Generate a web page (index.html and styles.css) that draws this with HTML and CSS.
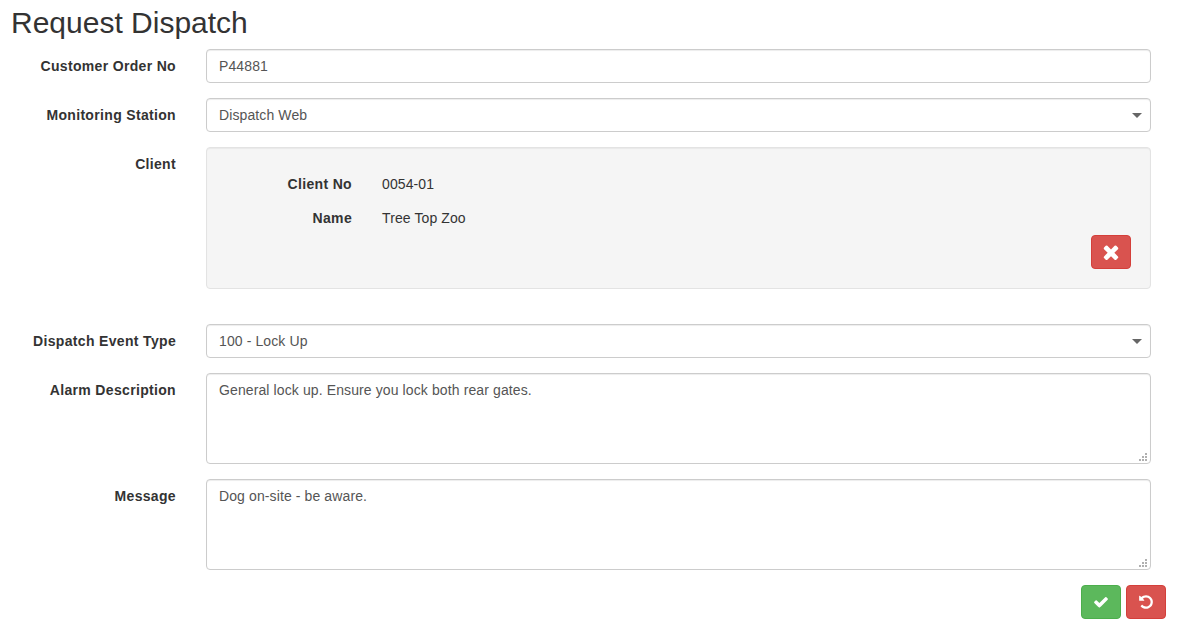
FILE: index.html
```html
<!DOCTYPE html>
<html lang="en">
<head>
<meta charset="utf-8">
<title>Request Dispatch</title>
<link rel="stylesheet" href="styles.css">
</head>
<body>
<h2 class="title">Request Dispatch</h2>
<form class="form">
  <div class="row">
    <label class="label">Customer Order No</label>
    <div class="field"><input class="control" type="text" value="P44881"></div>
  </div>
  <div class="row">
    <label class="label">Monitoring Station</label>
    <div class="field select-wrap">
      <select class="control select"><option>Dispatch Web</option></select>
    </div>
  </div>
  <div class="row row-client">
    <label class="label">Client</label>
    <div class="field">
      <div class="well">
        <div class="well-row"><span class="well-label">Client No</span><span class="well-value">0054-01</span></div>
        <div class="well-row"><span class="well-label">Name</span><span class="well-value">Tree Top Zoo</span></div>
        <div class="well-actions">
          <button class="btn btn-danger" type="button" aria-label="Remove client">
            <svg class="icon icon-times" viewBox="0 0 1792 1792"><path d="M1490 1322q0 40-28 68l-136 136q-28 28-68 28t-68-28l-294-294-294 294q-28 28-68 28t-68-28l-136-136q-28-28-28-68t28-68l294-294-294-294q-28-28-28-68t28-68l136-136q28-28 68-28t68 28l294 294 294-294q28-28 68-28t68 28l136 136q28 28 28 68t-28 68l-294 294 294 294q28 28 28 68z"/></svg>
          </button>
        </div>
      </div>
    </div>
  </div>
  <div class="row">
    <label class="label">Dispatch Event Type</label>
    <div class="field select-wrap">
      <select class="control select"><option>100 - Lock Up</option></select>
    </div>
  </div>
  <div class="row">
    <label class="label">Alarm Description</label>
    <div class="field"><textarea class="control area">General lock up. Ensure you lock both rear gates.</textarea></div>
  </div>
  <div class="row">
    <label class="label">Message</label>
    <div class="field"><textarea class="control area">Dog on-site - be aware.</textarea></div>
  </div>
  <div class="actions">
    <button class="btn btn-success" type="button" aria-label="Save">
      <svg class="icon" viewBox="0 0 1792 1792"><path d="M1671 566q0 40-28 68l-724 724-136 136q-28 28-68 28t-68-28l-136-136-362-362q-28-28-28-68t28-68l136-136q28-28 68-28t68 28l294 295 656-657q28-28 68-28t68 28l136 136q28 28 28 68z"/></svg>
    </button>
    <button class="btn btn-danger" type="button" aria-label="Undo">
      <svg class="icon" viewBox="0 0 1792 1792"><path d="M1664 896q0 156-61 298t-164 245-245 164-298 61q-172 0-327-72.5t-264-204.5q-7-10-6.5-22.5t8.5-20.5l137-138q10-9 25-9 16 2 23 12 73 95 179 147t225 52q104 0 198.5-40.5t163.5-109.5 109.5-163.5 40.5-198.5-40.5-198.5-109.5-163.5-163.5-109.5-198.5-40.5q-98 0-188 35.5t-160 101.5l137 138q31 30 14 69-17 40-59 40h-448q-26 0-45-19t-19-45v-448q0-42 40-59 39-17 69 14l130 129q107-101 244.5-156.5t284.5-55.5q156 0 298 61t245 164 164 245 61 298z"/></svg>
    </button>
  </div>
</form>
</body>
</html>
```
FILE: styles.css
```css
* {
  box-sizing: border-box;
}

html, body {
  margin: 0;
  background: #fff;
}

body {
  font-family: "Liberation Sans", Arial, sans-serif;
  font-size: 14px;
  line-height: 20px;
  color: #333;
  overflow: hidden;
}

.title {
  margin: 0;
  padding: 6px 0 10px 11px;
  font-size: 30px;
  font-weight: 400;
  line-height: 33px;
}

.form {
  padding-right: 22px;
}

.row {
  display: flex;
  gap: 30px;
  margin-bottom: 15px;
  padding-right: 15px;
}

.label {
  flex: 0 0 176px;
  padding-top: 7px;
  text-align: right;
  font-weight: 700;
  letter-spacing: .33px;
}

.field {
  flex: 1;
  min-width: 0;
}

.control {
  display: block;
  width: 100%;
  height: 34px;
  padding: 6px 12px;
  font: inherit;
  letter-spacing: .11px;
  color: #555;
  background: #fff;
  border: 1px solid #ccc;
  border-radius: 4px;
  box-shadow: inset 0 1px 1px rgba(0, 0, 0, .075);
  outline: none;
}

.select-wrap {
  position: relative;
}

.select {
  appearance: none;
  -webkit-appearance: none;
}

.select-wrap::after {
  content: "";
  position: absolute;
  top: 15px;
  right: 9px;
  border-left: 5px solid transparent;
  border-right: 5px solid transparent;
  border-top: 5px solid #666;
  pointer-events: none;
}

.area {
  height: 91px;
  resize: vertical;
}

.area::-webkit-resizer {
  background-color: transparent;
  background-image:
    linear-gradient(#b0b0b0, #b0b0b0),
    linear-gradient(#b0b0b0, #b0b0b0),
    linear-gradient(#b0b0b0, #b0b0b0),
    linear-gradient(#b0b0b0, #b0b0b0),
    linear-gradient(#b0b0b0, #b0b0b0),
    linear-gradient(#b0b0b0, #b0b0b0);
  background-repeat: no-repeat;
  background-size: 2px 2px;
  background-position: 4px 11px, 7px 11px, 10px 11px, 7px 8px, 10px 8px, 10px 5px;
}

.well {
  height: 142px;
  margin-bottom: 20px;
  padding: 19px;
  background: #f5f5f5;
  border: 1px solid #e3e3e3;
  border-radius: 4px;
  box-shadow: inset 0 1px 1px rgba(0, 0, 0, .05);
}

.well-row {
  display: flex;
  gap: 30px;
  height: 34px;
  padding-top: 7px;
}

.well-label {
  flex: 0 0 126px;
  text-align: right;
  font-weight: 700;
  letter-spacing: .33px;
}

.well-value {
  letter-spacing: .1px;
}

.well-actions {
  display: flex;
  justify-content: flex-end;
}

.actions {
  display: flex;
  justify-content: flex-end;
  gap: 5px;
}

.btn {
  display: flex;
  align-items: center;
  justify-content: center;
  width: 40px;
  height: 34px;
  padding: 0;
  border: 1px solid transparent;
  border-radius: 4px;
}

.btn-danger {
  background: #d9534f;
  border-color: #d43f3a;
}

.btn-success {
  background: #5cb85c;
  border-color: #4cae4c;
}

.icon {
  display: block;
  width: 16px;
  height: 16px;
  fill: #fff;
}

.icon-times {
  width: 22px;
  height: 22px;
}
```
